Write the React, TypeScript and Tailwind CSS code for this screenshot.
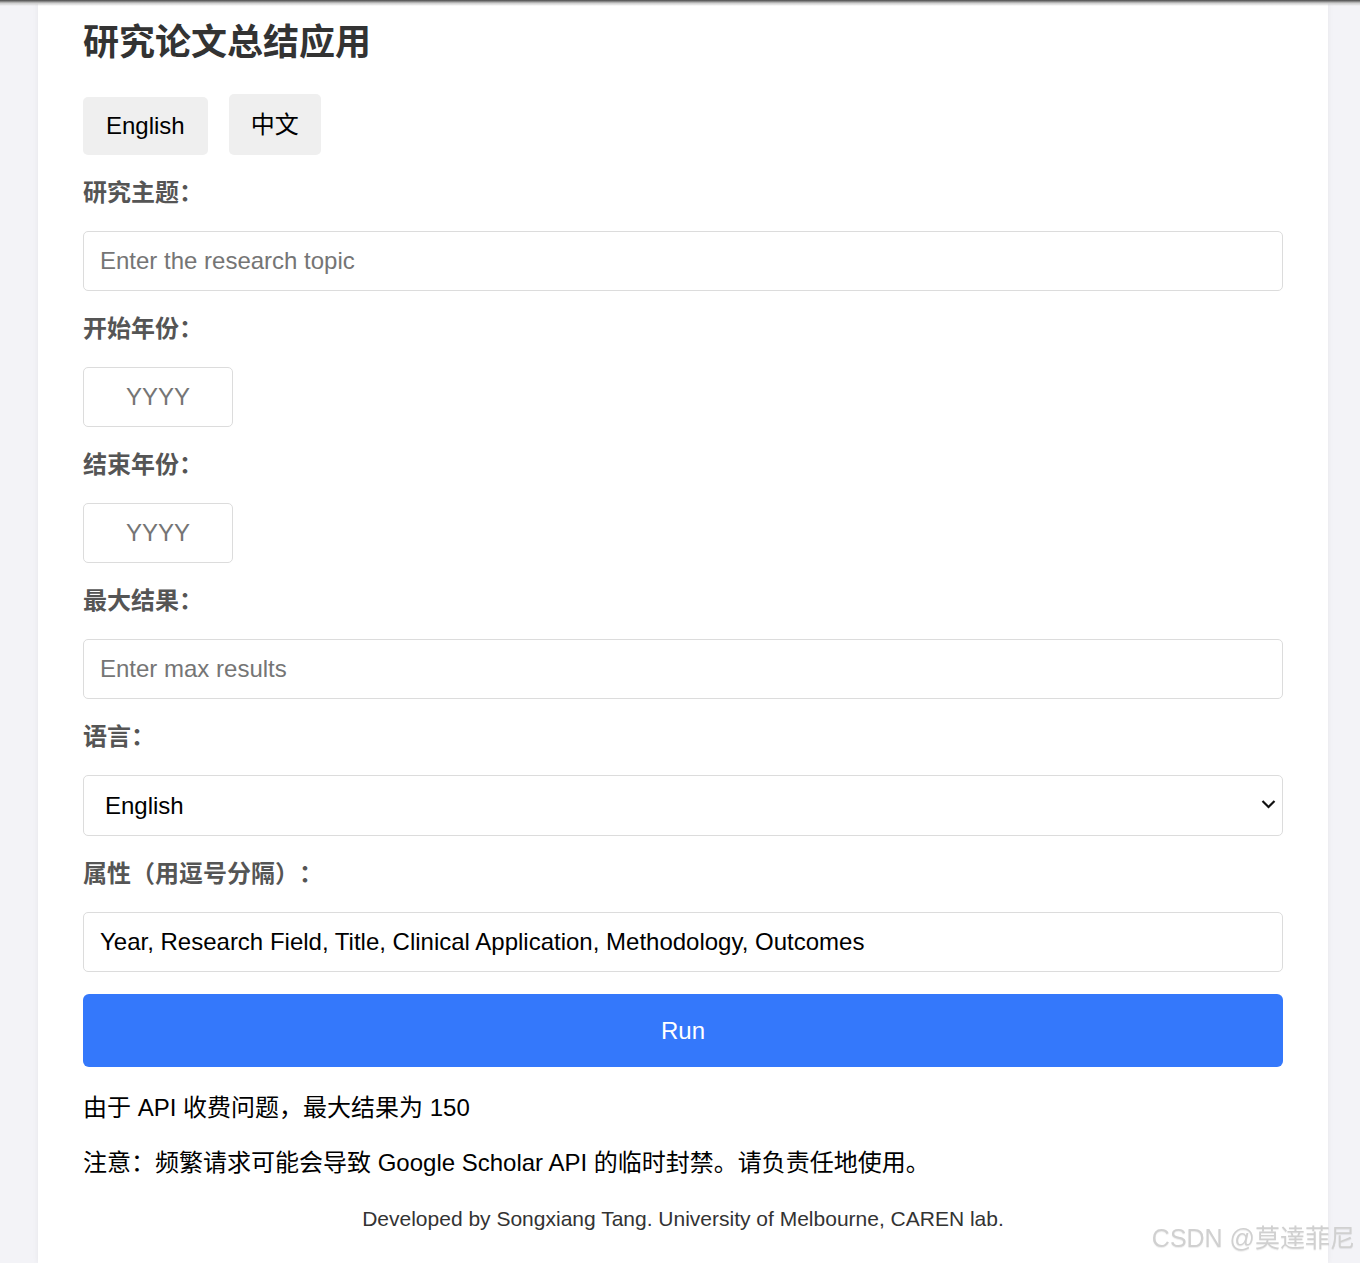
const fieldClass =
  'h-[60px] w-full rounded-[5px] border border-[#dcdcdc] bg-white px-4 text-[24px] text-black outline-none placeholder:text-[#757575]';

const Label = ({ children }: { children: React.ReactNode }) => (
  <label className="mt-[23px] mb-[23px] block text-[24px] font-bold leading-[30px] text-[#555] [text-spacing-trim:space-all]">
    {children}
  </label>
);

const App = () => {
  return (
    <div className="relative min-h-screen bg-[#f3f3f7] font-['Liberation_Sans','Noto_Sans_CJK_SC',sans-serif]">
      {/* window edge shadow */}
      <div className="pointer-events-none fixed inset-x-0 top-0 h-[6px] bg-gradient-to-b from-[#4a4a4a] via-[#c8c8c8] to-transparent" />

      <div className="ml-[38px] w-[1290px] bg-white px-[45px] pt-[18px] pb-[32px] shadow-[0_0_6px_rgba(0,0,0,0.06)]">
        <h1 className="text-[36px] font-bold leading-[50px] text-[#333]">研究论文总结应用</h1>

        {/* Language toggle */}
        <div className="mt-[26px] flex items-end gap-[21px]">
          <button className="h-[58px] rounded-[5px] bg-[#efefef] px-[23px] text-[24px] text-black">
            English
          </button>
          <button className="h-[61px] rounded-[5px] bg-[#efefef] px-[22px] text-[24px] text-black">
            中文
          </button>
        </div>

        <Label>研究主题：</Label>
        <input className={fieldClass} placeholder="Enter the research topic" />

        <Label>开始年份：</Label>
        <input className={`${fieldClass} !w-[150px] text-center`} placeholder="YYYY" />

        <Label>结束年份：</Label>
        <input className={`${fieldClass} !w-[150px] text-center`} placeholder="YYYY" />

        <Label>最大结果：</Label>
        <input className={fieldClass} placeholder="Enter max results" />

        <Label>语言：</Label>
        <div className="relative">
          <select
            defaultValue="en"
            className="h-[61px] w-full appearance-none rounded-[5px] border border-[#dcdcdc] bg-white pl-[21px] text-[24px] text-black outline-none"
          >
            <option value="en">English</option>
            <option value="zh">中文</option>
          </select>
          <svg
            className="pointer-events-none absolute right-[7px] top-[24px]"
            width="15"
            height="10"
            viewBox="0 0 15 10"
          >
            <path d="M1.5 2 L7.5 8 L13.5 2" fill="none" stroke="#111" strokeWidth="2.2" />
          </svg>
        </div>

        <Label>属性（用逗号分隔）：</Label>
        <input
          className={fieldClass}
          defaultValue="Year, Research Field, Title, Clinical Application, Methodology, Outcomes"
        />

        <button className="mt-[22px] h-[73px] w-full rounded-[6px] bg-[#3478fb] text-[24px] text-white">
          Run
        </button>

        <p className="mt-[23px] text-[24px] leading-[35px] text-black">由于 API 收费问题，最大结果为 150</p>
        <p className="mt-[20px] text-[24px] leading-[35px] text-black">
          注意：频繁请求可能会导致 Google Scholar API 的临时封禁。请负责任地使用。
        </p>

        <p className="mt-[26px] text-center text-[21px] leading-[25px] text-[#333]">
          Developed by Songxiang Tang. University of Melbourne, CAREN lab.
        </p>
      </div>

      {/* watermark */}
      <div className="pointer-events-none fixed bottom-[6px] right-[5px] text-[25px] text-[#d0d0d0] [text-shadow:0_1px_1px_rgba(0,0,0,0.08)]">
        CSDN @莫達菲尼
      </div>
    </div>
  );
};

export default App;
